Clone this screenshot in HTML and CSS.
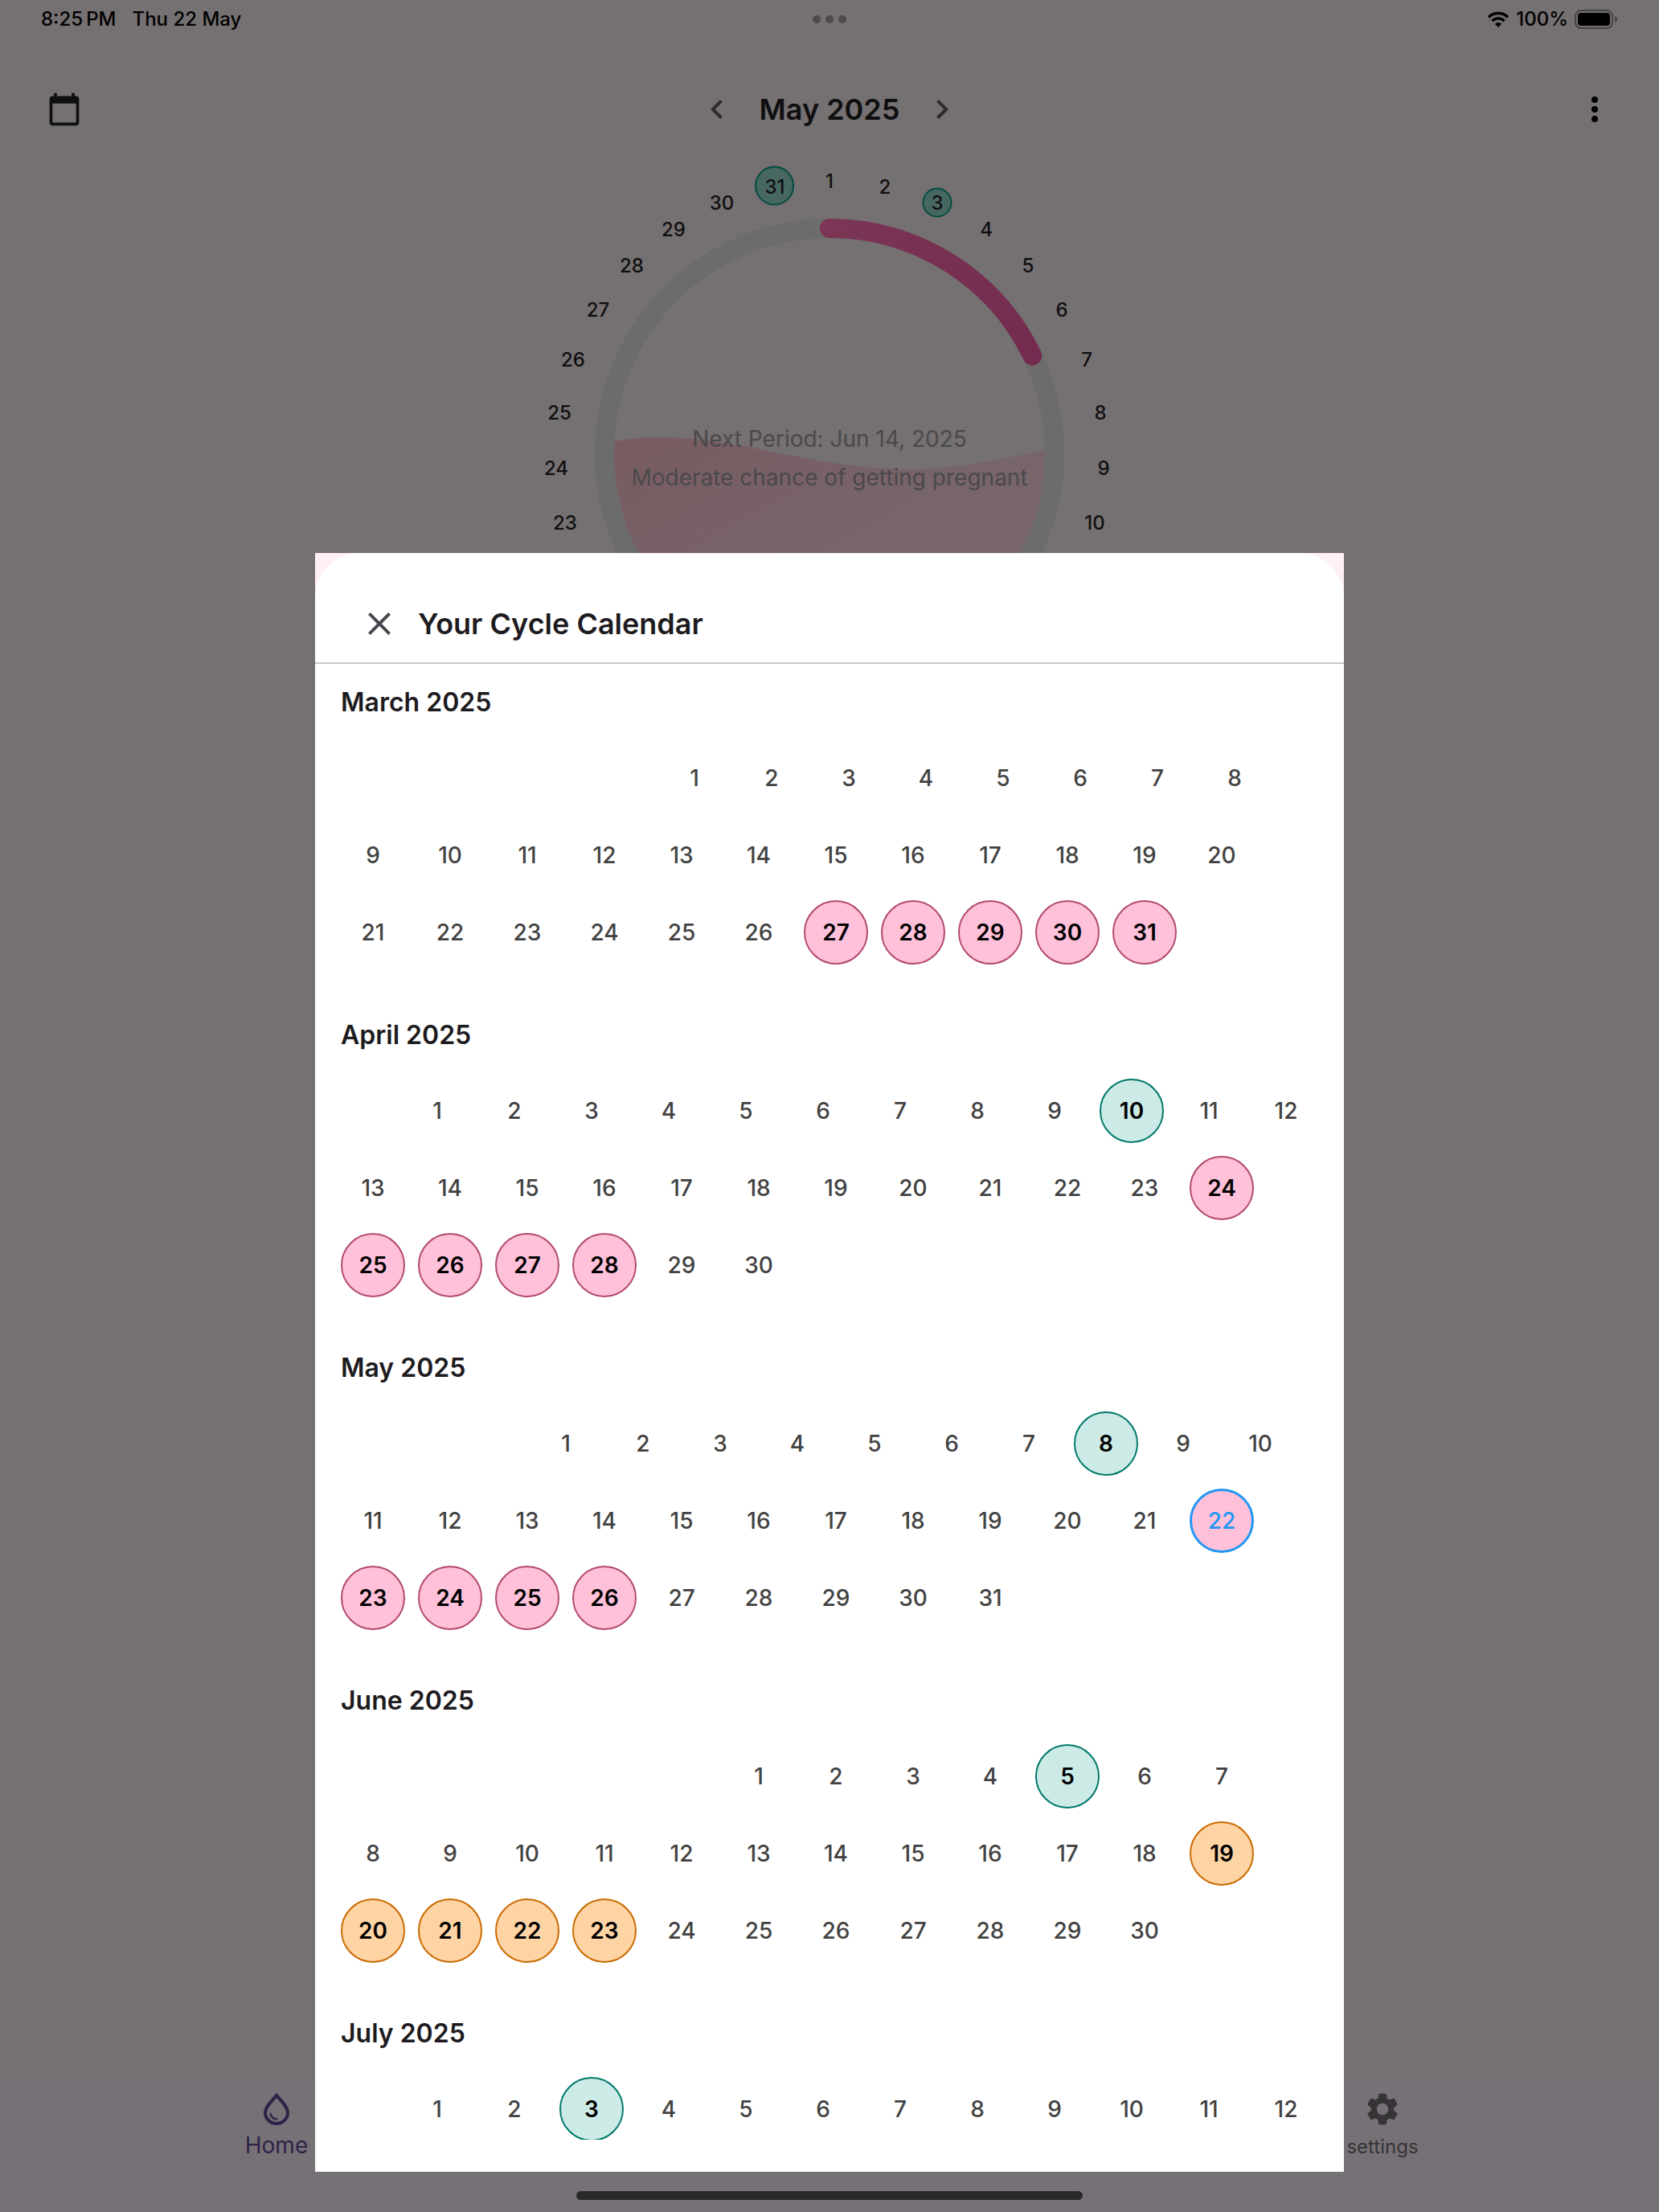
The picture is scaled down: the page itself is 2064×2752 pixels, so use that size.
FILE: index.html
```html
<!DOCTYPE html>
<html lang="en">
<head>
<meta charset="utf-8">
<meta name="viewport" content="width=device-width, initial-scale=1">
<title>Your Cycle Calendar</title>
<link rel="stylesheet" href="styles.css">
</head>
<body>
<div class="app">
  <div class="status">
    <div class="status-side"><span>8:25&#8201;PM</span><span>Thu 22 May</span></div>
    <svg class="dots" viewBox="0 0 42 10" aria-hidden="true"><circle cx="5" cy="5" r="5"/><circle cx="21" cy="5" r="5"/><circle cx="37" cy="5" r="5"/></svg>
    <div class="status-side status-right">
      <svg class="wifi" viewBox="0 0 28 20" aria-hidden="true"><path d="M2 7.500a17 17 0 0 1 24 0M6.500 12a10.600 10.600 0 0 1 15 0" fill="none" stroke="#000" stroke-width="3.400"/><path d="M14 20l-4.200-4.300a6 6 0 0 1 8.400 0z"/></svg>
      <span>100%</span>
      <svg class="battery" viewBox="0 0 54 24" aria-hidden="true"><rect x="1" y="1" width="46" height="22" rx="7" fill="none" stroke="#464344" stroke-width="2"/><rect x="4" y="4" width="40" height="16" rx="4"/><path d="M50 8c4 1.500 4 6.500 0 8z" fill="#464344"/></svg>
    </div>
  </div>

  <header class="topbar">
    <button class="icon-button" aria-label="Calendar"><svg class="icon-calendar" viewBox="0 0 24 24"><path d="M20 3h-1V1h-2v2H7V1H5v2H4c-1.100 0-2 .9-2 2v16c0 1.100.9 2 2 2h16c1.100 0 2-.9 2-2V5c0-1.100-.9-2-2-2zm0 18H4V8h16v13z"/></svg></button>
    <div class="month-nav">
      <button class="icon-button" aria-label="Previous month"><svg class="icon chevron" viewBox="0 0 24 24"><path d="M15.410 7.410L14 6l-6 6 6 6 1.410-1.410L10.830 12z"/></svg></button>
      <h1>May 2025</h1>
      <button class="icon-button" aria-label="Next month"><svg class="icon chevron" viewBox="0 0 24 24"><path d="M8.590 16.590L10 18l6-6-6-6-1.410 1.410L13.170 12z"/></svg></button>
    </div>
    <button class="icon-button" aria-label="More"><svg class="icon" viewBox="0 0 24 24"><circle cx="12" cy="6" r="2"/><circle cx="12" cy="12" r="2"/><circle cx="12" cy="18" r="2"/></svg></button>
  </header>

  <main class="cycle">
    <svg class="wheel" viewBox="0 0 760 760" role="img" aria-label="Cycle wheel">
      <defs>
        <linearGradient id="arc" gradientUnits="userSpaceOnUse" x1="380" y1="100" x2="640" y2="260"><stop offset="0" stop-color="#7b3555"/><stop offset="1" stop-color="#742b4f"/></linearGradient>
        <linearGradient id="water" x1="0" y1="0" x2="1" y2="1"><stop offset="0" stop-color="#785b61"/><stop offset=".5" stop-color="#77656a"/></linearGradient>
        <clipPath id="bowl"><circle cx="380" cy="380" r="268"/></clipPath>
      </defs>
      <circle cx="380" cy="380" r="280" fill="none" stroke="#6b6c6b" stroke-width="24"/>
      <path clip-path="url(#bowl)" fill="url(#water)" d="M112 365C131 362 149 360 168 360C220 360 271 370 323 381C375 391 426 400 478 400C538 400 588 388 648 376V650H112z"/>
      <path d="M380 100A280 280 0 0 1 632.300 258.600" fill="none" stroke="url(#arc)" stroke-width="24" stroke-linecap="round"/>
      <circle class="fertile" cx="311.600" cy="47" r="23.500"/>
      <circle class="fertile" cx="514" cy="68" r="17.500"/>
      <g class="wheel-days">
        <text x="380" y="50">1</text><text x="449" y="57">2</text><text x="514" y="77">3</text><text x="575" y="110">4</text><text x="627" y="155">5</text><text x="669" y="210">6</text><text x="700" y="272">7</text><text x="717" y="338">8</text><text x="721" y="407">9</text><text x="710" y="475">10</text>
        <text x="51" y="475">23</text><text x="40" y="407">24</text><text x="44" y="338">25</text><text x="61" y="272">26</text><text x="92" y="210">27</text><text x="134" y="155">28</text><text x="186" y="110">29</text><text x="246" y="77">30</text><text x="312" y="57">31</text>
      </g>
      <g class="wheel-note">
        <text x="380" y="372">Next Period: Jun 14, 2025</text>
        <text x="380" y="420">Moderate chance of getting pregnant</text>
      </g>
    </svg>
  </main>

  <nav class="tabs">
    <a class="tab tab-active" href="#home"><svg class="icon" viewBox="0 0 48 48"><path d="M24 7C19 13 10 21 10 28.500a14 13.500 0 0 0 28 0C38 21 29 13 24 7z" fill="none" stroke="currentColor" stroke-width="4"/><path d="M16.500 30q1.500 6 8 6.500" fill="none" stroke="currentColor" stroke-width="2.500" stroke-linecap="round"/></svg>Home</a>
    <a class="tab tab-settings" href="#settings"><svg class="icon" viewBox="0 0 24 24"><path d="M19.140 12.940c.04-.3.060-.61.060-.94 0-.32-.02-.64-.07-.94l2.030-1.580c.18-.14.230-.41.120-.61l-1.920-3.320c-.12-.22-.37-.29-.59-.22l-2.390.96c-.5-.38-1.030-.7-1.620-.94l-.36-2.540c-.04-.24-.24-.41-.48-.41h-3.840c-.24 0-.43.170-.47.410l-.36 2.540c-.59.240-1.130.570-1.620.940l-2.390-.96c-.22-.08-.47 0-.59.220L2.740 8.870c-.12.210-.08.470.12.610l2.030 1.580c-.05.3-.09.630-.09.940s.02.640.07.940l-2.030 1.580c-.18.140-.23.410-.12.610l1.920 3.320c.12.220.37.290.59.220l2.390-.96c.5.380 1.030.7 1.620.940l.36 2.540c.05.240.24.410.48.410h3.840c.24 0 .44-.17.470-.41l.36-2.540c.59-.24 1.130-.56 1.620-.94l2.390.96c.22.080.47 0 .59-.22l1.920-3.320c.12-.22.070-.47-.12-.61l-2.010-1.580zM12 15.600c-1.980 0-3.600-1.620-3.600-3.600s1.620-3.600 3.600-3.600 3.600 1.620 3.600 3.600-1.620 3.600-3.600 3.600z"/></svg>settings</a>
  </nav>
  <div class="home-indicator"></div>
</div>

<div class="overlay">
  <section class="sheet" role="dialog" aria-labelledby="sheet-title">
    <div class="sheet-body">
      <header class="sheet-head">
        <button class="close" aria-label="Close"><svg class="icon" viewBox="0 0 24 24"><path d="M19 6.410L17.590 5 12 10.590 6.410 5 5 6.410 10.590 12 5 17.590 6.410 19 12 13.410 17.590 19 19 17.590 13.410 12z"/></svg></button>
        <h2 id="sheet-title">Your Cycle Calendar</h2>
      </header>
      <div class="months">
        <section class="month">
          <h3>March 2025</h3>
          <ol class="days start-sat">
            <li>1</li><li>2</li><li>3</li><li>4</li><li>5</li><li>6</li><li>7</li><li>8</li><li>9</li><li>10</li><li>11</li><li>12</li><li>13</li><li>14</li><li>15</li><li>16</li><li>17</li><li>18</li><li>19</li><li>20</li><li>21</li><li>22</li><li>23</li><li>24</li><li>25</li><li>26</li><li class="period">27</li><li class="period">28</li><li class="period">29</li><li class="period">30</li><li class="period">31</li>
          </ol>
        </section>
        <section class="month">
          <h3>April 2025</h3>
          <ol class="days start-tue">
            <li>1</li><li>2</li><li>3</li><li>4</li><li>5</li><li>6</li><li>7</li><li>8</li><li>9</li><li class="ovulation">10</li><li>11</li><li>12</li><li>13</li><li>14</li><li>15</li><li>16</li><li>17</li><li>18</li><li>19</li><li>20</li><li>21</li><li>22</li><li>23</li><li class="period">24</li><li class="period">25</li><li class="period">26</li><li class="period">27</li><li class="period">28</li><li>29</li><li>30</li>
          </ol>
        </section>
        <section class="month">
          <h3>May 2025</h3>
          <ol class="days start-thu">
            <li>1</li><li>2</li><li>3</li><li>4</li><li>5</li><li>6</li><li>7</li><li class="ovulation">8</li><li>9</li><li>10</li><li>11</li><li>12</li><li>13</li><li>14</li><li>15</li><li>16</li><li>17</li><li>18</li><li>19</li><li>20</li><li>21</li><li class="period today">22</li><li class="period">23</li><li class="period">24</li><li class="period">25</li><li class="period">26</li><li>27</li><li>28</li><li>29</li><li>30</li><li>31</li>
          </ol>
        </section>
        <section class="month">
          <h3>June 2025</h3>
          <ol class="days start-sun">
            <li>1</li><li>2</li><li>3</li><li>4</li><li class="ovulation">5</li><li>6</li><li>7</li><li>8</li><li>9</li><li>10</li><li>11</li><li>12</li><li>13</li><li>14</li><li>15</li><li>16</li><li>17</li><li>18</li><li class="predicted">19</li><li class="predicted">20</li><li class="predicted">21</li><li class="predicted">22</li><li class="predicted">23</li><li>24</li><li>25</li><li>26</li><li>27</li><li>28</li><li>29</li><li>30</li>
          </ol>
        </section>
        <section class="month">
          <h3>July 2025</h3>
          <ol class="days start-tue">
            <li>1</li><li>2</li><li class="ovulation">3</li><li>4</li><li>5</li><li>6</li><li>7</li><li>8</li><li>9</li><li>10</li><li>11</li><li>12</li>
          </ol>
        </section>
      </div>
    </div>
  </section>
</div>
</body>
</html>
```
FILE: styles.css
```css
* { box-sizing: border-box; }

body {
  margin: 0;
  font-family: Inter, "Liberation Sans", sans-serif;
  color: #0f0f10;
  background: #757071;
}

button {
  padding: 0;
  border: 0;
  background: none;
  color: inherit;
  font: inherit;
}

svg { display: block; fill: currentColor; }
h1, h2, h3 { margin: 0; font-weight: 600; }

.icon { width: 48px; height: 48px; }

.app {
  min-height: 100vh;
  display: flex;
  flex-direction: column;
  position: relative;
}

/* Status bar */
.status {
  height: 48px;
  padding: 0 51px;
  display: grid;
  grid-template-columns: 1fr auto 1fr;
  align-items: center;
  font-size: 24px;
  font-weight: 500;
  line-height: 32px;
  color: #000;
}
.status-side { display: flex; align-items: center; gap: 20px; }
.status-right { justify-content: flex-end; gap: 8px; }
.dots { width: 42px; height: 10px; color: #4f494b; }
.wifi { width: 28px; height: 20px; }
.battery { width: 54px; height: 24px; }

/* Top bar */
.topbar {
  height: 176px;
  padding: 0 32px;
  display: grid;
  grid-template-columns: 1fr auto 1fr;
  align-items: center;
}
.icon-button {
  width: 96px;
  height: 96px;
  display: flex;
  align-items: center;
  justify-content: center;
}
.topbar > .icon-button:last-child { justify-self: end; color: #000; }
.icon-calendar { width: 44px; height: 44px; }
.month-nav { display: flex; align-items: center; }
.month-nav h1 {
  width: 184px;
  font-size: 36px;
  line-height: 48px;
  text-align: center;
}
.chevron { color: #2c2a2d; }

/* Cycle wheel */
.cycle { flex: 1; display: flex; justify-content: center; align-items: flex-start; margin-top: -40px; }
.wheel { width: 760px; height: 760px; }
.fertile { fill: #476860; stroke: #024b42; stroke-width: 2px; }
.wheel-days { font-size: 24px; font-weight: 500; text-anchor: middle; }
.wheel-note { font-size: 28px; fill: #4a494a; text-anchor: middle; }

/* Bottom tabs */
.tabs {
  height: 166px;
  display: grid;
  grid-template-columns: repeat(3, 1fr);
  background: #767176;
}
.tab {
  padding-top: 14px;
  display: flex;
  flex-direction: column;
  align-items: center;
  gap: 4px;
  font-size: 28px;
  line-height: 34px;
  color: #363437;
  text-decoration: none;
}
.tab-active { color: #2e2249; }
.tab-settings { grid-column: 3; font-size: 24px; line-height: 38px; }
.home-indicator {
  position: absolute;
  left: 50%;
  bottom: 15px;
  width: 630px;
  height: 11px;
  margin-left: -315px;
  border-radius: 6px;
  background: #2a2a2a;
}

/* Bottom sheet */
.overlay {
  position: fixed;
  inset: 25vh 0 50px;
  display: flex;
  justify-content: center;
}
.sheet {
  width: 100%;
  max-width: 1280px;
  background: #fff0f5;
}
.sheet-body {
  height: 100%;
  padding-bottom: 40px;
  display: flex;
  flex-direction: column;
  border-radius: 56px 56px 0 0;
  background: #fff;
}
.sheet-head {
  padding: 40px 32px 0;
  display: flex;
  align-items: center;
  border-bottom: 2px solid #cac4d0;
  color: #1d1b20;
}
.sheet-head h2 { font-size: 36px; line-height: 48px; }
.close {
  width: 96px;
  height: 96px;
  display: flex;
  align-items: center;
  justify-content: center;
  color: #49454f;
}
.months {
  flex: 1;
  min-height: 0;
  overflow: hidden;
  padding: 28px 32px 0;
}
.month { padding-bottom: 68px; }
.month h3 {
  margin-bottom: 34px;
  font-size: 32px;
  line-height: 40px;
  color: #1d1b20;
}

.days {
  margin: 0;
  padding: 0;
  display: flex;
  flex-wrap: wrap;
  gap: 16px;
  list-style: none;
}
.days li {
  width: 80px;
  height: 80px;
  display: flex;
  align-items: center;
  justify-content: center;
  border-radius: 50%;
  font-size: 28px;
  font-weight: 500;
  color: #424242;
}
/* The first day is indented 80px for each weekday after Monday */
.start-tue li:first-child { margin-left: 80px; }
.start-thu li:first-child { margin-left: 240px; }
.start-sat li:first-child { margin-left: 400px; }
.start-sun li:first-child { margin-left: 480px; }

.days .period, .days .ovulation, .days .predicted {
  border: 2px solid #b34a6a;
  background: #ffc1da;
  font-weight: 600;
  color: #000;
}
.days .ovulation { border-color: #00796b; background: #cdebe6; }
.days .predicted { border-color: #c96a00; background: #ffd4a4; }
.days .today { border: 3px solid #2196f3; font-weight: 500; color: #2196f3; }
```
